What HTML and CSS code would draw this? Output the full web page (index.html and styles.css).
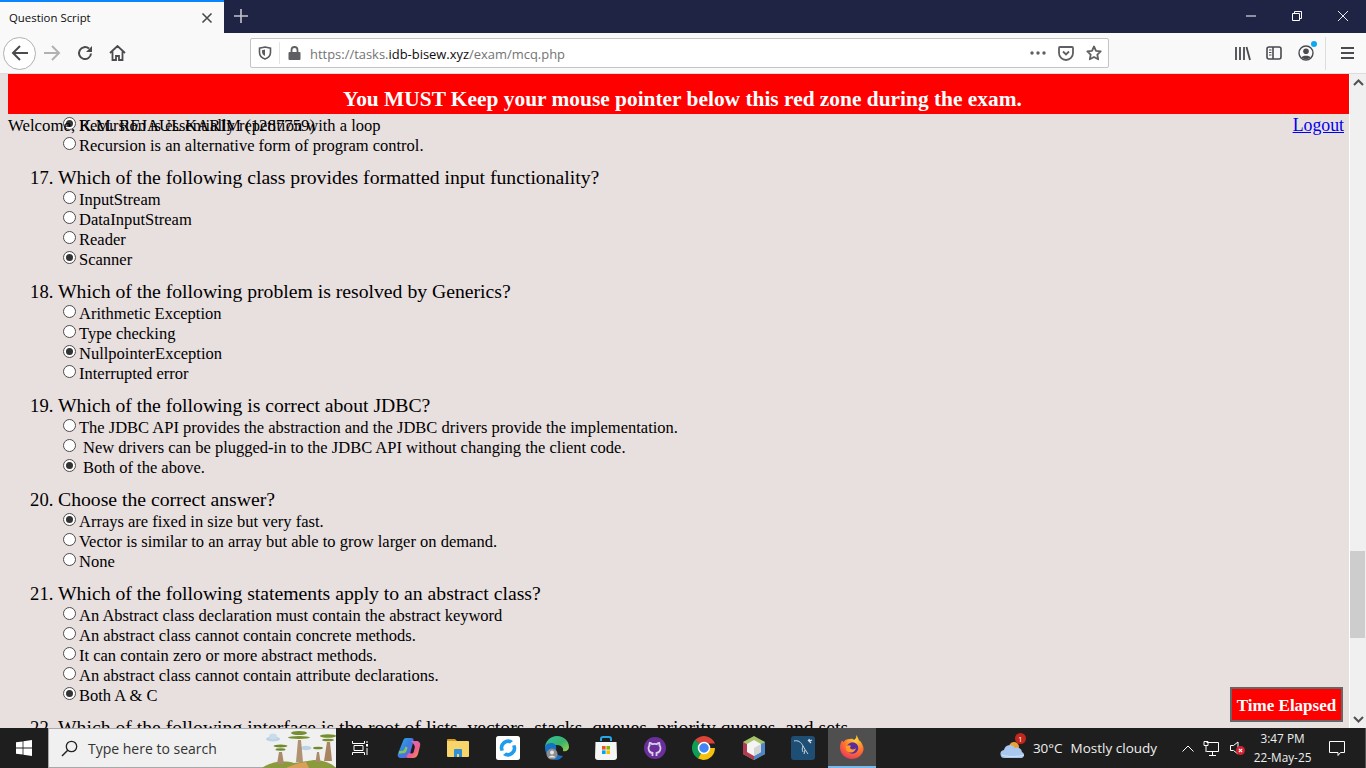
FILE: index.html
```html
<!DOCTYPE html>
<html lang="en">
<head>
<meta charset="utf-8">
<title>Question Script</title>
<link rel="stylesheet" href="styles.css">
</head>
<body>
<div class="browser">
  <header class="tabbar">
    <div class="tab">
      <span class="tab-title">Question Script</span>
      <svg class="tab-close" width="12" height="12" viewBox="0 0 12 12"><path d="M1.500 1.500l9 9M10.500 1.500l-9 9" stroke="#4a4a4f" stroke-width="1.600"/></svg>
    </div>
    <svg class="new-tab" width="14" height="14" viewBox="0 0 14 14"><path d="M7 0v14M0 7h14" stroke="#c4c5cf" stroke-width="1.600"/></svg>
    <div class="win-controls">
      <svg width="10" height="10" viewBox="0 0 10 10"><path d="M0 5h10" stroke="#fff"/></svg>
      <svg width="10" height="10" viewBox="0 0 10 10"><path d="M2.500 2.500V.5h7v7h-2M.5 2.500h7v7h-7z" fill="none" stroke="#fff"/></svg>
      <svg width="10" height="10" viewBox="0 0 10 10"><path d="M0 0l10 10M10 0L0 10" stroke="#fff" stroke-width=".9"/></svg>
    </div>
  </header>

  <nav class="navbar">
    <div class="back-btn">
      <svg width="18" height="18" viewBox="0 0 18 18"><path d="M9 2L2 9l7 7M2 9h15" fill="none" stroke="#4a4a4f" stroke-width="2"/></svg>
    </div>
    <svg class="nav-forward" width="18" height="18" viewBox="0 0 18 18"><path d="M9 2l7 7-7 7M16 9H1" fill="none" stroke="#b1b1b3" stroke-width="2"/></svg>
    <svg class="nav-reload" width="16" height="16" viewBox="0 0 16 16"><path d="M14 8.500A6 6 0 1 1 12 3.600" fill="none" stroke="#4a4a4f" stroke-width="2"/><path d="M15 1v6H9z" fill="#4a4a4f"/></svg>
    <svg class="nav-home" width="17" height="16" viewBox="0 0 17 16"><path d="M1 8l7.500-7L16 8M3.500 6.500V15h3.500v-4h3v4h3.500V6.500" fill="none" stroke="#4a4a4f" stroke-width="1.800"/></svg>
    <div class="urlbar">
      <svg class="url-shield" width="14" height="14" viewBox="0 0 14 14"><path d="M7 1l5.500 1.200v4.300c0 3.200-2.300 5.400-5.500 6.500C3.800 11.900 1.500 9.700 1.500 6.500V2.200z" fill="none" stroke="#5b5b60" stroke-width="1.600"/><path d="M7 3.500v6.500C5.300 9.300 4 8 4 6V4.200z" fill="#5b5b60"/></svg>
      <span class="url-sep"></span>
      <svg class="url-lock" width="13" height="14" viewBox="0 0 13 14"><path d="M3.500 6V4a3 3 0 0 1 6 0v2" fill="none" stroke="#5f5f63" stroke-width="1.800"/><rect x=".5" y="6" width="12" height="8" rx="1" fill="#5f5f63"/></svg>
      <span class="url-text">https://tasks.<b class="url-domain">idb-bisew.xyz</b>/exam/mcq.php</span>
      <svg class="url-dots" width="16" height="4" viewBox="0 0 16 4"><circle cx="2" cy="2" r="1.700" fill="#5f5f63"/><circle cx="8" cy="2" r="1.700" fill="#5f5f63"/><circle cx="14" cy="2" r="1.700" fill="#5f5f63"/></svg>
      <svg class="url-pocket" width="16" height="15" viewBox="0 0 16 15"><path d="M2 1h12a1 1 0 0 1 1 1v5a7 7 0 0 1-14 0V2a1 1 0 0 1 1-1z" fill="none" stroke="#5f5f63" stroke-width="1.800"/><path d="M5 5.500l3 3 3-3" fill="none" stroke="#5f5f63" stroke-width="1.800"/></svg>
      <svg class="url-star" width="16" height="16" viewBox="0 0 16 16"><path d="M8 1.500l2 4.300 4.700.6-3.400 3.200.9 4.700L8 12l-4.200 2.300.9-4.700L1.300 6.400 6 5.800z" fill="none" stroke="#5f5f63" stroke-width="1.800" stroke-linejoin="round"/></svg>
    </div>
    <svg class="tool-library" width="16" height="15" viewBox="0 0 16 15"><path d="M1 1v13M5 1v13M9 1v13M11.500 1l3.500 13" stroke="#4a4a4f" stroke-width="1.800" fill="none"/></svg>
    <svg class="tool-sidebar" width="16" height="14" viewBox="0 0 16 14"><rect x="1" y="1" width="14" height="12" rx="2" fill="none" stroke="#4a4a4f" stroke-width="1.600"/><path d="M7 1v12" stroke="#4a4a4f" stroke-width="1.600"/><path d="M3 4h2.500M3 6.500h2.500M3 9h2.500" stroke="#4a4a4f"/></svg>
    <div class="tool-account">
      <svg width="16" height="16" viewBox="0 0 16 16"><circle cx="8" cy="8" r="7" fill="none" stroke="#4a4a4f" stroke-width="1.400"/><circle cx="8" cy="6.200" r="2.800" fill="#4a4a4f"/><path d="M3.300 12.500c1-2.400 8.400-2.400 9.400 0A7 7 0 0 1 3.300 12.500z" fill="#4a4a4f"/></svg>
      <span class="account-dot"></span>
    </div>
    <span class="tool-sep"></span>
    <svg class="tool-menu" width="13" height="12" viewBox="0 0 13 12"><path d="M0 1h13M0 6h13M0 11h13" stroke="#4a4a4f" stroke-width="1.800"/></svg>
  </nav>

  <div class="viewport">
    <main class="page">
      <div class="options options-tail">
        <label class="opt"><input type="radio" name="q16" checked>Recursion is essentially repetition with a loop</label>
        <label class="opt"><input type="radio" name="q16">Recursion is an alternative form of program control.</label>
      </div>
      <ol class="questions" start="17">
        <li class="question">
          <p class="q-title">Which of the following class provides formatted input functionality?</p>
          <div class="options">
            <label class="opt"><input type="radio" name="q17">InputStream</label>
            <label class="opt"><input type="radio" name="q17">DataInputStream</label>
            <label class="opt"><input type="radio" name="q17">Reader</label>
            <label class="opt"><input type="radio" name="q17" checked>Scanner</label>
          </div>
        </li>
        <li class="question">
          <p class="q-title">Which of the following problem is resolved by Generics?</p>
          <div class="options">
            <label class="opt"><input type="radio" name="q18">Arithmetic Exception</label>
            <label class="opt"><input type="radio" name="q18">Type checking</label>
            <label class="opt"><input type="radio" name="q18" checked>NullpointerException</label>
            <label class="opt"><input type="radio" name="q18">Interrupted error</label>
          </div>
        </li>
        <li class="question">
          <p class="q-title">Which of the following is correct about JDBC?</p>
          <div class="options">
            <label class="opt"><input type="radio" name="q19">The JDBC API provides the abstraction and the JDBC drivers provide the implementation.</label>
            <label class="opt"><input type="radio" name="q19"><span class="lead">New drivers can be plugged-in to the JDBC API without changing the client code.</span></label>
            <label class="opt"><input type="radio" name="q19" checked><span class="lead">Both of the above.</span></label>
          </div>
        </li>
        <li class="question">
          <p class="q-title">Choose the correct answer?</p>
          <div class="options">
            <label class="opt"><input type="radio" name="q20" checked>Arrays are fixed in size but very fast.</label>
            <label class="opt"><input type="radio" name="q20">Vector is similar to an array but able to grow larger on demand.</label>
            <label class="opt"><input type="radio" name="q20">None</label>
          </div>
        </li>
        <li class="question">
          <p class="q-title">Which of the following statements apply to an abstract class?</p>
          <div class="options">
            <label class="opt"><input type="radio" name="q21">An Abstract class declaration must contain the abstract keyword</label>
            <label class="opt"><input type="radio" name="q21">An abstract class cannot contain concrete methods.</label>
            <label class="opt"><input type="radio" name="q21">It can contain zero or more abstract methods.</label>
            <label class="opt"><input type="radio" name="q21">An abstract class cannot contain attribute declarations.</label>
            <label class="opt"><input type="radio" name="q21" checked>Both A &amp; C</label>
          </div>
        </li>
        <li class="question">
          <p class="q-title">Which of the following interface is the root of lists, vectors, stacks, queues, priority queues, and sets</p>
        </li>
      </ol>
    </main>

    <div class="scrollbar">
      <svg width="11" height="7" viewBox="0 0 11 7"><path d="M1 6l4.500-4.500L10 6" fill="none" stroke="#505050" stroke-width="2"/></svg>
      <div class="scroll-track"><div class="scroll-thumb"></div></div>
      <svg width="11" height="7" viewBox="0 0 11 7"><path d="M1 1l4.500 4.500L10 1" fill="none" stroke="#505050" stroke-width="2"/></svg>
    </div>

    <div class="red-zone">You MUST Keep your mouse pointer below this red zone during the exam.</div>
    <div class="welcome">
      <span>Welcome, K.M. REJAUL KARIM (1287759)</span>
      <a class="logout" href="#">Logout</a>
    </div>
    <div class="timer">Time Elapsed</div>
  </div>

  <footer class="taskbar">
    <div class="start">
      <svg width="16" height="16" viewBox="0 0 16 16"><path d="M0 2.300l6.600-.9v6.200H0zM7.400 1.300L16 0v7.600H7.400zM0 8.400h6.600v6.200L0 13.700zM7.400 8.400H16V16l-8.600-1.300z" fill="#fff"/></svg>
    </div>
    <div class="search">
      <svg class="search-glass" width="17" height="17" viewBox="0 0 17 17"><circle cx="10.500" cy="6.500" r="5.200" fill="none" stroke="#222" stroke-width="1.300"/><path d="M6.700 10.300L1 16" stroke="#222" stroke-width="1.500"/></svg>
      <span class="search-text">Type here to search</span>
      <svg class="search-art" width="74" height="40" viewBox="0 0 74 40">
        <ellipse cx="11" cy="11" rx="7" ry="2.600" fill="#bcd3e6"/><ellipse cx="11" cy="8.500" rx="4" ry="3" fill="#c8dcec"/>
        <ellipse cx="44" cy="20" rx="5.500" ry="2.200" fill="#bcd3e6"/>
        <path d="M0 40c8-6 22-8 32-5l20-3c8 0 18 3 22 8z" fill="#8b9a3c"/>
        <path d="M24 40c6-3 12-5 20-6l3 6z" fill="#d9a05c"/>
        <path d="M17 24h3l2 12h-7z" fill="#a98a6a"/><ellipse cx="18.500" cy="18" rx="7" ry="1.500" fill="#6f8a2e"/><ellipse cx="18.500" cy="21.500" rx="5" ry="1.200" fill="#6f8a2e"/>
        <path d="M36 12h3l2 22h-7z" fill="#b09272"/><ellipse cx="37" cy="5" rx="8" ry="2" fill="#758f30"/><ellipse cx="37" cy="9.500" rx="11" ry="1.400" fill="#758f30"/>
        <path d="M55 24h2l1.500 10h-5z" fill="#a98a6a"/><ellipse cx="56" cy="20" rx="5" ry="1.300" fill="#6f8a2e"/>
        <path d="M65 14h3l2 19h-8z" fill="#a98460"/><ellipse cx="66" cy="8" rx="8" ry="1.800" fill="#758f30"/><ellipse cx="66" cy="12" rx="6" ry="1.300" fill="#758f30"/>
      </svg>
    </div>
    <div class="apps">
      <div class="app">
        <svg width="16" height="16" viewBox="0 0 16 16"><path d="M.5 1v2.500h12V1M.5 15v-2.500h12V15M2 5.500h9v5H2z" fill="none" stroke="#fff"/><rect x="14" y="4" width="2" height="2.500" fill="#fff"/><path d="M15 1v2M15 8v7" stroke="#fff"/></svg>
      </div>
      <div class="app">
        <svg width="24" height="22" viewBox="0 0 24 22"><defs><linearGradient id="cp1" x1="0" y1="0" x2="1" y2="1"><stop offset="0" stop-color="#1fb6e8"/><stop offset=".5" stop-color="#3f7be0"/><stop offset="1" stop-color="#7a5fd8"/></linearGradient><linearGradient id="cp2" x1="0" y1="0" x2="1" y2="1"><stop offset="0" stop-color="#c86be0"/><stop offset=".6" stop-color="#ee5f8c"/><stop offset="1" stop-color="#f5a63c"/></linearGradient></defs><path d="M9 1h5c2 0 3 1 2.500 3L13 17c-1 3-3 4-6 4H4c-2.500 0-4-2-3-4.500L6 4c.6-2 1.500-3 3-3z" fill="url(#cp1)"/><path d="M14 4h5c3 0 5 2 4 5l-2 8c-1 3-3 4-5 4h-5c-2 0-2-1.500-1-2.500l2-2.500 2.500.5c1 0 2-.5 2.300-2l1-4c.2-2-1-3.500-3.800-6.500z" fill="url(#cp2)"/><path d="M2 15.500l3.500-.5c1.500 0 2.500-.5 3-2l1-3" fill="none" stroke="#7cc95a" stroke-width="2.500"/></svg>
      </div>
      <div class="app">
        <svg width="22" height="20" viewBox="0 0 22 20"><path d="M0 2a1 1 0 0 1 1-1h7l2 2h-10z" fill="#d59a1e"/><path d="M0 3h21a1 1 0 0 1 1 1v14a1 1 0 0 1-1 1H1a1 1 0 0 1-1-1z" fill="#f7d56b"/><path d="M7 12a1 1 0 0 1 1-1h6a1 1 0 0 1 1 1v7h-3v-3h-2v3H7z" fill="#2f8fd8"/></svg>
      </div>
      <div class="app">
        <svg width="24" height="24" viewBox="0 0 24 24"><rect width="24" height="24" rx="2.500" fill="#fff"/><path d="M4.500 15A8.300 8.300 0 0 1 17 5l-3 2.500A4.800 4.800 0 0 0 8 14.300z" fill="#1e9cf0"/><path d="M19.500 9A8.300 8.300 0 0 1 7 19l3-2.500A4.800 4.800 0 0 0 16 9.700z" fill="#1e9cf0"/></svg>
      </div>
      <div class="app">
        <svg width="24" height="24" viewBox="0 0 24 24"><defs><linearGradient id="edg" x1="0" y1="0" x2="1" y2="1"><stop offset="0" stop-color="#33c3a0"/><stop offset=".55" stop-color="#39b26c"/><stop offset="1" stop-color="#a5d84a"/></linearGradient></defs><path d="M0 12C0 5 5.500 0 12 0c7 0 12 5 12 11 0 3-3 5-6 4 1-3-2-6-6-6C6 9 4 13 4 16z" fill="url(#edg)"/><path d="M0 12c0-4 4-5 7-5 3 0 5 3 4 7-.5 3 2 6 7 6-2 2.500-4 4-7 4C5 24 0 18 0 12z" fill="#1670c5"/><circle cx="7" cy="18" r="5.500" fill="#8d8d8d"/><circle cx="7" cy="16.500" r="2" fill="#e5e5e5"/><path d="M3.500 21.500c1-2.500 6-2.500 7 0z" fill="#e5e5e5"/></svg>
      </div>
      <div class="app">
        <svg width="24" height="24" viewBox="0 0 24 24"><path d="M7 5V3a2 2 0 0 1 2-2h6a2 2 0 0 1 2 2v2" fill="none" stroke="#25a9e8" stroke-width="2"/><path d="M1.500 6h21l.5 15a3 3 0 0 1-3 3H4a3 3 0 0 1-3-3z" fill="#f5f5f5"/><path d="M8 10h3.600v3.600H8z" fill="#f25022"/><path d="M12.400 10H16v3.600h-3.600z" fill="#7fba00"/><path d="M8 14.400h3.600V18H8z" fill="#00a4ef"/><path d="M12.400 14.400H16V18h-3.600z" fill="#ffb900"/></svg>
      </div>
      <div class="app">
        <svg width="22" height="22" viewBox="0 0 22 22"><circle cx="11" cy="11" r="11" fill="#6b2f9c"/><path d="M8.500 19v-3c-2.500 .5-3-1-3.500-2m3.500 2c-2.500-.5-4-2-4-5 0-1 .5-2 1-2.500-.2-1 0-2 .2-2.500 1 0 2 .7 2.500 1.200a8 8 0 0 1 4.600 0c.5-.5 1.500-1.200 2.500-1.200.2 .5 .4 1.500 .2 2.500 .5 .5 1 1.500 1 2.500 0 3-1.500 4.500-4 5v3" fill="none" stroke="#d9cfe6" stroke-width="1.800"/></svg>
      </div>
      <div class="app">
        <svg width="24" height="24" viewBox="0 0 24 24"><path d="M12 12L3.200 3.800A12 12 0 0 1 23 7.500H12z" fill="#db4437"/><path d="M12 12l-6 10.400A12 12 0 0 1 3.200 3.800z" fill="#0f9d58"/><path d="M12 12h11a12 12 0 0 1-12 12l-5-1.600z" fill="#f4c20d"/><circle cx="12" cy="12" r="5.500" fill="#4285f4" stroke="#fff" stroke-width="1.500"/></svg>
      </div>
      <div class="app">
        <svg width="22" height="24" viewBox="0 0 22 24"><path d="M11 0l11 6v12l-11 6-11-6V6z" fill="#a8c46a"/><path d="M0 6l11 6v12L0 18z" fill="#b23a4e"/><path d="M22 6l-11 6v12l11-6z" fill="#4d86c6"/><path d="M11 4l7 4v8l-7 4-7-4V8z" fill="#f4f4f4"/><path d="M11 12l7-4v8l-7 4z" fill="#d5d5d5"/></svg>
      </div>
      <div class="app">
        <svg width="24" height="24" viewBox="0 0 24 24"><rect width="24" height="24" rx="3" fill="#1f4e74"/><path d="M3 5c4-1 7 1 9 5 1.500 3 3 5 5 8M12 10c-1 2-1 4 0 6M14 14l-1 4" fill="none" stroke="#c7d6e2" stroke-width="1"/><path d="M17 4l3 3M18 3l1 2 2-1" fill="none" stroke="#d5dfe8" stroke-width="1.200"/></svg>
      </div>
      <div class="app app-active">
        <svg width="24" height="24" viewBox="0 0 24 24"><defs><radialGradient id="ffx" cx=".65" cy=".2" r="1"><stop offset="0" stop-color="#ffd43a"/><stop offset=".45" stop-color="#ff7a2b"/><stop offset="1" stop-color="#e3206c"/></radialGradient></defs><path d="M16 0c3 3 2 5 4 6 2 2 4 6 3.500 9-1 5-6 9-11.500 9C5.500 24 0 19 0 12.500 0 10 .7 7.500 2 5.500l1.500 1.500C5 4.500 8 3.500 10 4c2-.5 3 0 4 1 2.500-1.500 2.500-3 2-5z" fill="url(#ffx)"/><circle cx="12.500" cy="13" r="5.800" fill="#5a2ca0"/><path d="M6 11c2-1 4-1 5 0-1 1-1.500 2 0 3 2 1 4 0 5-1-.5 3-3 5-6 4.500C7 17 5 14 6 11z" fill="#ff9a2b"/></svg>
      </div>
    </div>
    <div class="tray">
      <div class="weather-icon">
        <svg width="26" height="24" viewBox="0 0 26 24"><circle cx="14" cy="11" r="5" fill="#e9a13a"/><path d="M5 22a4 4 0 0 1-1-8 6 6 0 0 1 11-2 5 5 0 0 1 7 4 3.200 3.200 0 0 1 0 6z" fill="#a9c8ee"/><path d="M2 19c5 2 15 2 22 0" stroke="#d6e6f8" fill="none"/></svg>
        <span class="weather-badge">1</span>
      </div>
      <span class="weather-temp">30°C</span>
      <span class="weather-desc">Mostly cloudy</span>
      <svg class="tray-chevron" width="12" height="7" viewBox="0 0 12 7"><path d="M.5 6.500L6 1l5.500 5.500" fill="none" stroke="#fff"/></svg>
      <svg class="tray-net" width="16" height="15" viewBox="0 0 16 15"><path d="M3.500 1.500h12v9H3.500M1 .5h4v4H1zM3 4.500V11M6 14.500h7M9.500 10.500v4" fill="none" stroke="#fff"/></svg>
      <div class="tray-vol">
        <svg width="15" height="14" viewBox="0 0 15 14"><path d="M.5 4.500h3L8 1v12L3.500 9.500h-3z" fill="none" stroke="#fff"/></svg>
        <svg class="vol-x" width="9" height="9" viewBox="0 0 9 9"><circle cx="4.500" cy="4.500" r="4.500" fill="#d4202f"/><path d="M2.800 2.800l3.400 3.400M6.200 2.800L2.800 6.200" stroke="#fff" stroke-width="1.100"/></svg>
      </div>
      <div class="clock"><span>3:47 PM</span><span>22-May-25</span></div>
      <svg class="tray-notify" width="16" height="15" viewBox="0 0 16 15"><path d="M.5 .5h15v11h-4l-2.500 3v-3H.5z" fill="none" stroke="#fff"/></svg>
      <span class="show-desktop"></span>
    </div>
  </footer>
</div>
</body>
</html>
```
FILE: styles.css
```css
* { box-sizing: border-box; }
html, body { margin: 0; padding: 0; height: 100%; overflow: hidden; }
.browser { width: 1366px; height: 768px; display: flex; flex-direction: column; font-family: "Noto Sans", sans-serif; }
svg { display: block; flex: none; }

/* Tab strip */
.tabbar { height: 33px; flex: none; background: #1f2344; display: flex; align-items: center; }
.tab { width: 224px; height: 33px; background: #f9f9fa; border-top: 2px solid #0a84ff; display: flex; align-items: center; padding: 0 11px 0 9px; justify-content: space-between; }
.tab-title { font-size: 11.400px; color: #0c0c0d; font-family: "Open Sans", sans-serif; padding-bottom: 1px; }
.new-tab { margin-left: 10px; margin-top: -2px; }
.win-controls { margin-left: auto; display: flex; gap: 36px; padding-right: 18px; margin-top: -1px; }

/* Navigation bar */
.navbar { height: 41px; flex: none; background: #f9f9fa; border-bottom: 1px solid #dcdcde; display: flex; align-items: center; }
.back-btn { width: 33px; height: 33px; border-radius: 50%; border: 1px solid #b1b1b3; background: #fff; display: flex; align-items: center; justify-content: center; margin-left: 3px; }
.nav-forward { margin-left: 7px; }
.nav-reload { margin-left: 16px; }
.nav-home { margin-left: 16px; }
.urlbar { width: 859px; height: 30px; margin-left: 124px; background: #fff; border: 1px solid #c4c4c6; border-radius: 2px; display: flex; align-items: center; padding-left: 7px; }
.url-sep { width: 1px; height: 22px; background: #e4e4e6; margin-left: 7px; }
.url-lock { margin-left: 8px; }
.url-text { margin-left: 9px; padding-top: 2px; font-size: 12.950px; color: #737373; font-family: "Open Sans", sans-serif; }
.url-domain { font-weight: 400; color: #0c0c0d; }
.url-dots { margin-left: auto; }
.url-pocket { margin-left: 12px; }
.url-star { margin-left: 12px; margin-right: 6px; }
.tool-library { margin-left: 126px; }
.tool-sidebar { margin-left: 15px; }
.tool-account { margin-left: 16px; position: relative; }
.account-dot { position: absolute; top: -4px; right: -3px; width: 6px; height: 6px; border-radius: 50%; background: #0fa8f0; }
.tool-sep { width: 1px; height: 33px; background: #dcdcde; margin-left: 11px; }
.tool-menu { margin-left: 15px; }

/* Page area */
.viewport { flex: 1; min-height: 0; display: flex; position: relative; background: #e8dfdf; }
.page { flex: 1; min-width: 0; overflow: hidden; padding: 41px 0 0 8px; font-family: "Liberation Serif", serif; color: #000; font-size: 16.500px; line-height: 20px; }
.options { padding-left: 5px; display: flex; flex-direction: column; font-size: 16.500px; line-height: 20px; }
.options-tail { padding-left: 55px; margin-bottom: 11px; }
.opt { height: 20px; display: flex; align-items: center; white-space: nowrap; padding-top: 2px; }
.opt input { appearance: none; -webkit-appearance: none; margin: -5px 3px 0 0; width: 13px; height: 13px; flex: none; border: 1px solid #4c4c4c; border-radius: 50%; background: #fff; display: grid; place-items: center; }
.opt input:checked::before { content: ""; width: 7px; height: 7px; border-radius: 50%; background: #333; }
.lead { margin-left: 4px; }
.questions { margin: 0; padding: 0 0 0 50px; }
.question { margin-bottom: 11px; font-size: 19.700px; line-height: 22px; }
.question::marker { font-size: 18.600px; }
.q-title { margin: 0 0 1px; white-space: nowrap; }

.red-zone { position: absolute; left: 8px; top: 0; width: 1341px; height: 40px; padding-left: 8px; background: #f00; color: #fff; font: bold 21.400px/50px "Liberation Serif", serif; text-align: center; }
.welcome { position: absolute; left: 8px; top: 42px; width: 1341px; display: flex; justify-content: space-between; align-items: flex-start; padding-right: 5px; font: 16.800px/20px "Liberation Serif", serif; color: #000; }
.logout { color: #00e; text-decoration: underline; font-size: 17.800px; margin-top: -1px; }
.timer { position: absolute; left: 1230px; top: 613px; width: 113px; height: 35px; background: #f00; border: 2px solid #666; color: #fff; font: bold 17px/34px "Liberation Serif", serif; text-align: center; white-space: nowrap; }

/* Scrollbar */
.scrollbar { width: 17px; flex: none; background: #f0f0f0; border-left: 1px solid #fff; display: flex; flex-direction: column; align-items: center; padding: 5px 0; }
.scroll-track { flex: 1; width: 100%; display: flex; flex-direction: column; }
.scroll-thumb { width: 15px; height: 87px; margin-top: 465px; background: #cdcdcd; }

/* Windows taskbar */
.taskbar { height: 40px; flex: none; background: #1e1e1e; display: flex; align-items: center; color: #fff; }
.start { width: 48px; display: flex; justify-content: center; }
.search { width: 288px; height: 40px; background: #f0f0f0; border-top: 1px solid #a8a8a8; border-bottom: 1px solid #a8a8a8; border-left: 1px solid #a8a8a8; display: flex; align-items: center; position: relative; color: #333; }
.search-glass { margin-left: 12px; }
.search-text { margin-left: 10px; font: 14px "Open Sans", sans-serif; }
.search-art { margin-left: auto; }
.apps { display: flex; gap: 1.200px; height: 40px; }
.app { width: 48px; height: 40px; display: flex; align-items: center; justify-content: center; }
.app-active { background: #4f4f4f; border-bottom: 2px solid #76b9ed; }
.tray { flex: 1; min-width: 0; height: 40px; display: flex; align-items: center; font-family: "Open Sans", sans-serif; color: #eee; }
.weather-icon { position: relative; margin-left: 124px; }
.weather-badge { position: absolute; top: -3px; right: 0; width: 11px; height: 11px; border-radius: 50%; background: #c5261c; color: #fff; font-size: 8px; line-height: 11px; text-align: center; }
.weather-temp { margin-left: 7px; font-size: 13.500px; }
.weather-desc { margin-left: 8px; font-size: 13.500px; white-space: nowrap; }
.tray-chevron { margin-left: 25px; }
.tray-net { margin-left: 9px; }
.tray-vol { margin-left: 11px; position: relative; }
.vol-x { position: absolute; right: 0; bottom: 0; }
.clock { width: 72px; margin-left: 4px; display: flex; flex-direction: column; align-items: center; font-size: 11.800px; line-height: 19px; white-space: nowrap; }
.tray-notify { margin-left: 13px; }
.show-desktop { width: 1px; height: 40px; background: #555; margin-left: 20px; }
```
